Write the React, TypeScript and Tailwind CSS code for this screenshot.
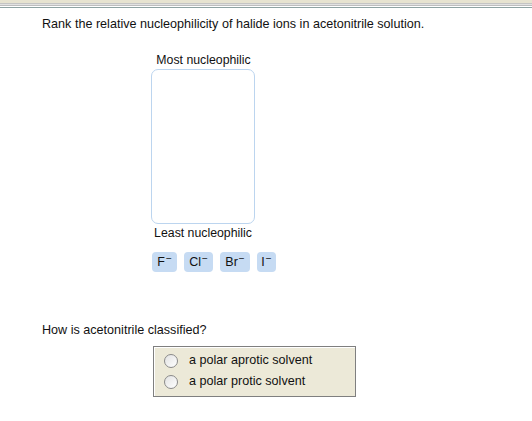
const IONS = [
  { base: "F", w: "w-[25px]" },
  { base: "Cl", w: "w-[29px]" },
  { base: "Br", w: "w-[30px]" },
  { base: "I", w: "w-[19px]" },
];

const CHOICES = ["a polar aprotic solvent", "a polar protic solvent"];

function Radio() {
  return (
    <span className="inline-block h-[14px] w-[14px] rounded-full border border-[#8a8a8a] bg-gradient-to-br from-[#e2e2e2] to-white" />
  );
}

export default function App() {
  return (
    <div className="h-[421px] w-[532px] bg-white font-['Liberation_Sans',Arial,sans-serif] text-[13px] text-[#111]">
      {/* frame edge */}
      <div className="h-[3px] bg-[#e7e3d0]" />
      <div className="h-px bg-[#c4c4c4]" />
      <div className="h-px bg-[#e2e2e2]" />
      <div className="h-px bg-[#bdbdbd]" />
      <div className="h-px bg-white" />
      <div className="h-px bg-[#8fa3a3]" />

      <p className="mt-[9px] pl-[42px] text-[12.6px] leading-[15px]">
        Rank the relative nucleophilicity of halide ions in acetonitrile solution.
      </p>

      <div className="mt-[21px] flex w-[300px] flex-col pl-[151px]">
        <div className="w-[105px] text-center text-[12.3px] leading-[14px]">Most nucleophilic</div>
        <div className="mt-[2px] h-[155px] w-[104px] rounded-[7px] border border-[#bcd5ef] bg-white" />
        <div className="mt-[2px] w-[104px] text-center text-[12.3px] leading-[14px]">Least nucleophilic</div>
        <div className="mt-[12px] flex gap-[7px] pl-px">
          {IONS.map((ion) => (
            <div
              key={ion.base}
              className={`flex h-[20px] ${ion.w} items-center justify-center rounded-[4px] bg-[#c6dbf3] text-[12.5px] leading-none`}
            >
              {ion.base}
              <span className="relative -top-[3px] ml-px text-[10px]">&#8722;</span>
            </div>
          ))}
        </div>
      </div>

      <p className="mt-[51px] pl-[42px] text-[12.6px] leading-[15px]">How is acetonitrile classified?</p>

      <div className="ml-[153px] mt-[8px] flex w-[203px] flex-col gap-[6px] border border-[#7f7f7f] bg-[#ece9d8] pb-[7px] pl-[10px] pt-[6px] shadow-[inset_1px_1px_0_#ffffff]">
        {CHOICES.map((c) => (
          <label key={c} className="flex items-center gap-[11px] text-[12.6px] leading-[15px]">
            <Radio />
            {c}
          </label>
        ))}
      </div>
    </div>
  );
}
